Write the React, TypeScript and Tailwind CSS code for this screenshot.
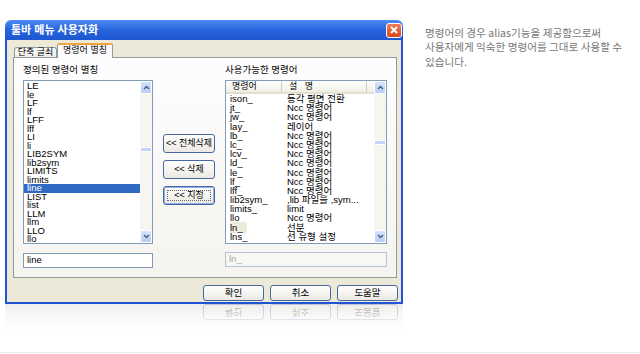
import React from "react";

const leftItems = [
  "LE", "le", "LF", "lf", "LFF", "lff", "LI", "li", "LIB2SYM", "lib2sym",
  "LIMITS", "limits", "line", "LIST", "list", "LLM", "llm", "LLO", "llo",
];

const rightItems: [string, string][] = [
  ["ison_", "등각 평면 전환"],
  ["jt_", "Ncc 명령어"],
  ["jw_", "Ncc 명령어"],
  ["lay_", "레이어"],
  ["lb_", "Ncc 명령어"],
  ["lc_", "Ncc 명령어"],
  ["lcv_", "Ncc 명령어"],
  ["ld_", "Ncc 명령어"],
  ["le_", "Ncc 명령어"],
  ["lf_", "Ncc 명령어"],
  ["lff_", "Ncc 명령어"],
  ["lib2sym_", ",lib 파일을 ,sym..."],
  ["limits_", "limit"],
  ["llo_", "Ncc 명령어"],
  ["ln_", "선분"],
  ["lns_", "선 유형 설정"],
];

function ArrowButton({ up }: { up?: boolean }) {
  return (
    <div className="flex h-[13px] w-[12px] items-center justify-center rounded-[2px] border border-white bg-linear-to-b from-[#d6e2fd] to-[#b9cdf8]">
      <svg width="7" height="5" viewBox="0 0 7 5">
        <path
          d={up ? "M1 4 L3.5 1.5 L6 4" : "M1 1 L3.5 3.5 L6 1"}
          fill="none"
          stroke="#4d6185"
          strokeWidth="1.5"
        />
      </svg>
    </div>
  );
}

function ScrollBar({ thumbTop }: { thumbTop: number }) {
  return (
    <div className="flex w-[12px] flex-col bg-[#f6f5f0]">
      <ArrowButton up />
      <div className="flex flex-1 flex-col">
        <div style={{ height: thumbTop }} />
        <div className="h-[5px] w-[12px] rounded-[1px] border border-white bg-[#c3d4fb]" />
      </div>
      <ArrowButton />
    </div>
  );
}

function XpButton({ label, focused, className }: { label: string; focused?: boolean; className: string }) {
  return (
    <div
      className={`relative flex items-center justify-center rounded-[3px] border border-[#46689f] bg-linear-to-b from-white to-[#ebe9e1] text-black ${className} ${
        focused ? "shadow-[inset_0_0_0_1px_#8fb0ea]" : ""
      }`}
    >
      {focused && <span className="absolute inset-[3px] border border-dotted border-[#666]" />}
      {label}
    </div>
  );
}

function BottomButtons() {
  return (
    <div className="flex justify-end gap-[6px] pr-[3px]">
      <XpButton label="확인" className="h-[16px] w-[61px] text-[9.5px]" />
      <XpButton label="취소" className="h-[16px] w-[61px] text-[9.5px]" />
      <XpButton label="도움말" className="h-[16px] w-[61px] text-[9.5px]" />
    </div>
  );
}

export default function App() {
  return (
    <div className="flex h-[354px] w-[640px] flex-col bg-white font-['Liberation_Sans','Noto_Sans_CJK_KR',sans-serif]">
      <div className="flex pl-[5px] pt-[20px]">
        {/* Dialog window */}
        <div className="w-[398px]">
          <div className="flex h-[20px] items-center justify-between rounded-t-[6px] bg-linear-to-b from-[#4d8cf2] via-[#2663dd] to-[#1d56d0] pl-[6px] pr-[1px]">
            <span className="text-[11px] leading-none font-semibold text-white">툴바 메뉴 사용자화</span>
            <div className="flex h-[15px] w-[16px] items-center justify-center rounded-[3px] border border-white bg-linear-to-b from-[#ef7d55] to-[#d9461e]">
              <svg width="8" height="8" viewBox="0 0 8 8">
                <path d="M1 1 L7 7 M7 1 L1 7" stroke="white" strokeWidth="1.8" />
              </svg>
            </div>
          </div>

          <div className="border-x-2 border-b-2 border-[#1f55d3] bg-[#ece9d8] pb-[1px]">
            {/* Tabs */}
            <div className="flex h-[17px] items-end pl-[7px] pt-[3px]">
              <div className="flex h-[10px] w-[43px] items-center justify-center rounded-t-[3px] border border-b-0 border-[#919b9c] bg-linear-to-b from-white to-[#ecebe6] text-[9px] leading-none">
                단축 글쇠
              </div>
              <div className="relative z-10 -mb-px flex h-[15px] w-[56px] flex-col rounded-t-[3px] border-x border-[#919b9c] bg-[#fcfcfe]">
                <div className="h-[2px] rounded-t-[3px] bg-[#f1a33c]" />
                <div className="flex flex-1 items-start justify-center pt-px text-[9px] leading-[9px]">명령어 별칭</div>
              </div>
            </div>

            {/* Tab panel */}
            <div className="ml-[6px] mr-[4px] flex border border-[#919b9c] bg-linear-to-b from-[#fdfdfe] to-[#f5f4ef] pb-[9px] pl-[9px] pt-[7px]">
              {/* Left column */}
              <div className="w-[130px]">
                <div className="h-[10px] text-[9.5px] leading-[10px]">정의된 명령어 별칭</div>
                <div className="mt-[5px] flex h-[164px] border border-[#7f9db9] bg-white">
                  <div className="flex-1 pt-px">
                    {leftItems.map((item) => (
                      <div
                        key={item}
                        className={`h-[8.5px] pl-[3px] text-[9.5px] leading-[8.5px] ${
                          item === "line" ? "bg-[#316ac5] text-white" : "text-black"
                        }`}
                      >
                        {item}
                      </div>
                    ))}
                  </div>
                  <ScrollBar thumbTop={53} />
                </div>
                <div className="mt-[9px] flex h-[15px] items-center border border-[#7f9db9] bg-white pl-[3px] text-[9.5px]">
                  line
                </div>
              </div>

              {/* Middle buttons */}
              <div className="ml-[10px] flex w-[52px] flex-col gap-[7px] pt-[69px] text-[9px]">
                <XpButton label="<< 전체삭제" className="h-[19px]" />
                <XpButton label="<< 삭제" className="h-[19px]" />
                <XpButton label="<< 지정" focused className="h-[19px]" />
              </div>

              {/* Right column */}
              <div className="ml-[10px] w-[162px]">
                <div className="h-[10px] text-[9.5px] leading-[10px]">사용가능한 명령어</div>
                <div className="mt-[5px] flex h-[164px] border border-[#7f9db9] bg-white">
                  <div className="flex-1">
                    <div className="flex h-[13px] items-center border-b-2 border-[#e3e0cf] bg-linear-to-b from-white to-[#f0eee4] text-[9px]">
                      <div className="flex h-full w-[56px] items-center border-r border-[#d3cfbe] pl-[6px]">명령어</div>
                      <div className="flex h-full w-[85px] items-center border-r border-[#d3cfbe] pl-[7px]">설&nbsp;&nbsp;&nbsp;명</div>
                    </div>
                    {rightItems.map(([cmd, desc]) => (
                      <div key={cmd} className="flex h-[9.2px] pl-[4px] text-[9.5px] leading-[9.2px] text-black">
                        <div className="w-[57px]">
                          <span className={cmd === "ln_" ? "bg-[#ecebdc] pr-[4px]" : ""}>{cmd}</span>
                        </div>
                        <div className="whitespace-nowrap">{desc}</div>
                      </div>
                    ))}
                  </div>
                  <ScrollBar thumbTop={46} />
                </div>
                <div className="mt-[8px] flex h-[15px] items-center border border-[#b4c3d6] bg-[#f7f7f3] pl-[3px] text-[9.5px] text-[#a8a8a0]">
                  ln_
                </div>
              </div>
            </div>

            {/* Dialog buttons */}
            <div className="mt-[7px]">
              <BottomButtons />
            </div>
          </div>

          {/* Reflection */}
          <div className="relative h-[32px] bg-linear-to-b from-[#ededed] to-white">
            <div className="-scale-y-100 pt-[6px] opacity-30">
              <div className="pr-[2px]">
                <BottomButtons />
              </div>
            </div>
            <div className="absolute inset-0 bg-linear-to-b from-transparent to-white" />
          </div>
        </div>

        {/* Description */}
        <div className="ml-[22px] mt-[5.5px] whitespace-nowrap font-['Noto_Sans_CJK_KR',sans-serif] text-[10.6px] leading-[14.5px] text-[#777]">
          <div>명령어의 경우 alias기능을 제공함으로써</div>
          <div>사용자에게 익숙한 명령어를 그대로 사용할 수</div>
          <div>있습니다.</div>
        </div>
      </div>

      <div className="flex-1" />
      <div className="h-px bg-[#e8e8e8]" />
      <div className="h-px" />
    </div>
  );
}
